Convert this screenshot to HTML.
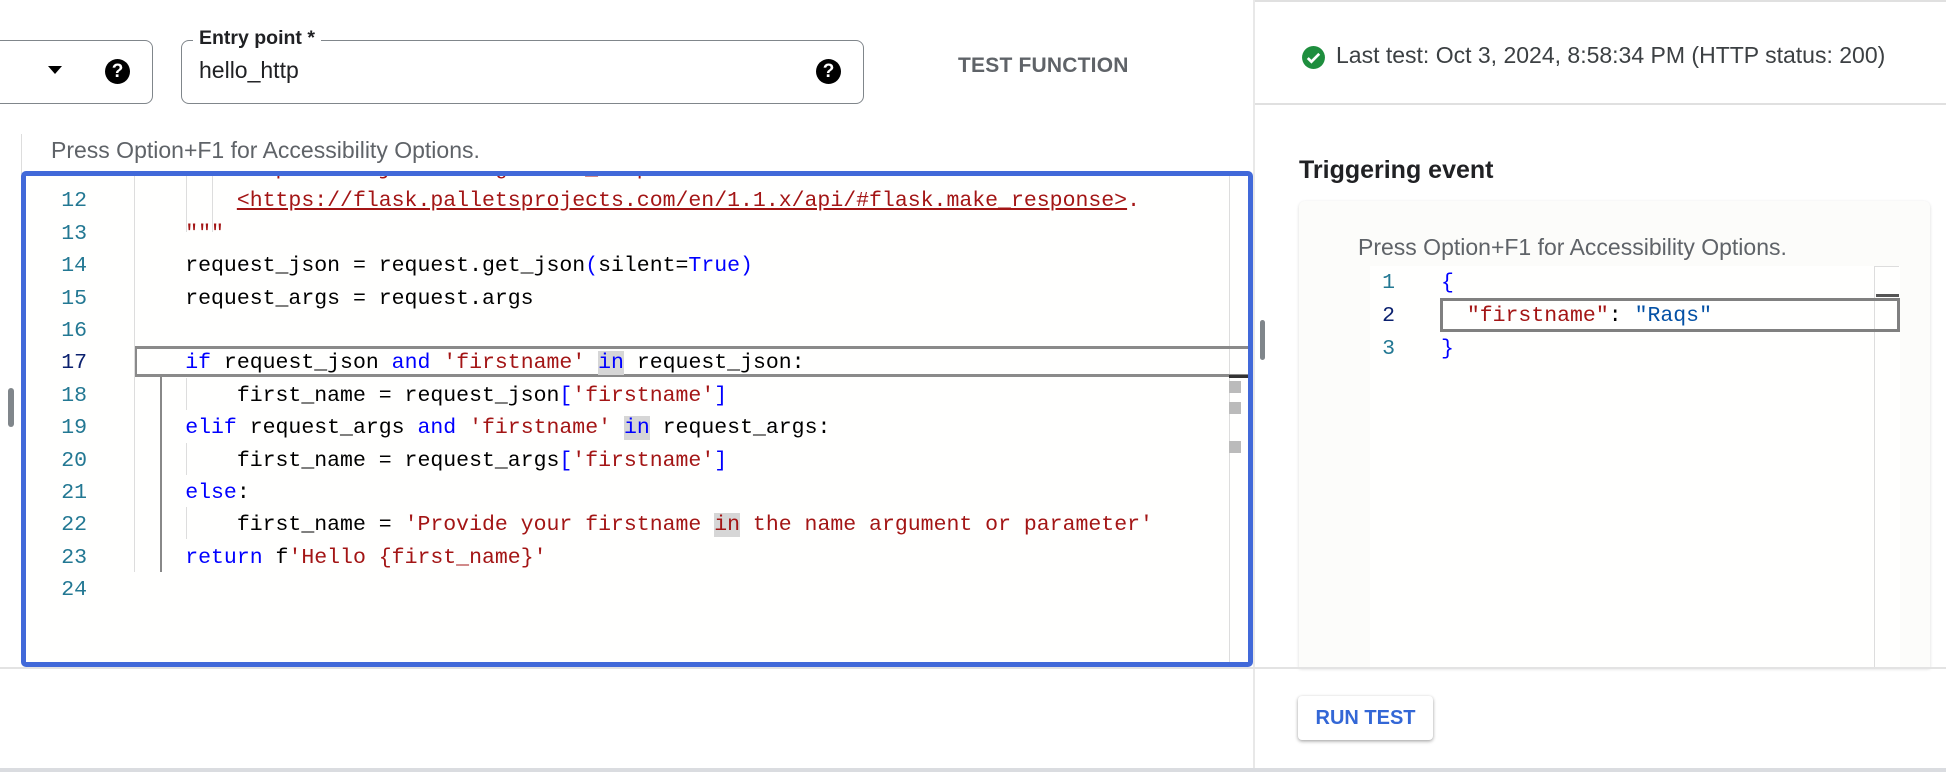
<!DOCTYPE html>
<html><head><meta charset="utf-8"><style>
*{margin:0;padding:0;box-sizing:border-box}
body{width:1946px;height:772px;overflow:hidden;background:#fff;position:relative;font-family:"Liberation Sans",sans-serif}
.a{position:absolute}
.mono{font-family:"Liberation Mono",monospace;font-size:21.5px;white-space:pre;line-height:32px}
.k{color:#0000ff}.s{color:#a31515}.n{color:#237893}
.hl{background:#d6d6d6}
.q{width:25px;height:25px;border-radius:50%;background:#000;color:#fff;font-weight:bold;font-size:19px;text-align:center;line-height:25px}
</style></head><body>
<!-- top fields -->
<div class="a" style="left:-10px;top:40px;width:163px;height:64px;border:1.5px solid #80868b;border-radius:8px"></div>
<div class="a" style="left:48px;top:66px;width:0;height:0;border-left:7px solid transparent;border-right:7px solid transparent;border-top:8px solid #000"></div>
<div class="a q" style="left:105px;top:59px">?</div>
<div class="a" style="left:181px;top:40px;width:683px;height:64px;border:1.5px solid #80868b;border-radius:8px"></div>
<div class="a" style="left:193px;top:27px;background:#fff;padding:0 6px;font-size:19.5px;font-weight:bold;color:#202124">Entry point *</div>
<div class="a" style="left:199px;top:57px;font-size:23px;color:#202124">hello_http</div>
<div class="a q" style="left:816px;top:59px">?</div>
<div class="a" style="left:958px;top:54px;font-size:21px;font-weight:bold;color:#5f6368;letter-spacing:0.2px">TEST FUNCTION</div>

<!-- left editor -->
<div class="a" style="left:21px;top:134px;width:1px;height:40px;background:#ddd"></div>
<div class="a" style="left:51px;top:137px;font-size:23px;color:#5f6368">Press Option+F1 for Accessibility Options.</div>
<div class="a" style="left:8px;top:388px;width:6px;height:39px;border-radius:3px;background:#80868b"></div>

<div class="a" style="left:21px;top:171px;width:1232px;height:496px;border:5px solid #4169d9;border-radius:5px;overflow:hidden;background:#fffffe">
 <div class="a" style="left:-26px;top:-176px;width:1946px;height:800px">
  <div class="a" style="left:134px;top:0;width:1px;height:572px;background:#ddd"></div>
  <div class="a" style="left:1229px;top:0;width:1px;height:800px;background:#ddd"></div>
  <!-- current line -->
  <div class="a" style="left:135px;top:346px;width:1120px;height:31px;border-top:3px solid #8a8a8a;border-bottom:3px solid #8a8a8a;border-left:2px solid #8a8a8a"></div>
  <div class="a" style="left:1229px;top:375px;width:20px;height:3px;background:#333"></div>
  <div class="a" style="left:1229px;top:381px;width:12px;height:12px;background:#bbb"></div>
  <div class="a" style="left:1229px;top:402px;width:12px;height:12px;background:#bbb"></div>
  <div class="a" style="left:1229px;top:441px;width:12px;height:12px;background:#bbb"></div>
  <!-- indent guides -->
  <div class="a" style="left:160px;top:377px;width:2px;height:195px;background:#888"></div>
  <div class="a" style="left:186px;top:140px;width:1px;height:92px;background:#ddd"></div>
  <div class="a" style="left:212px;top:140px;width:1px;height:92px;background:#ddd"></div>
  <div class="a" style="left:186px;top:378px;width:1px;height:32px;background:#ddd"></div>
  <div class="a" style="left:186px;top:443px;width:1px;height:32px;background:#ddd"></div>
  <div class="a" style="left:186px;top:507px;width:1px;height:32px;background:#ddd"></div>
  <!-- line numbers -->
  <div class="a mono n" style="left:30px;top:153px;width:57px;text-align:right;line-height:32.4px">11
12
13
14
15
16
<span style="color:#0b216f">17</span>
18
19
20
21
22
23
24</div>
  <div class="a mono" style="left:82px;top:153px;line-height:32.4px"><span class="s">            Response object using `make_response`</span>
<span class="s">            <span style="text-decoration:underline">&lt;https://flask.palletsprojects.com/en/1.1.x/api/#flask.make_response&gt;</span>.</span>
<span class="s">        """</span>
        request_json = request.get_json<span class="k">(</span>silent=<span class="k">True</span><span class="k">)</span>
        request_args = request.args

        <span class="k">if</span> request_json <span class="k">and</span> <span class="s">'firstname'</span> <span class="k hl">in</span> request_json:
            first_name = request_json<span class="k">[</span><span class="s">'firstname'</span><span class="k">]</span>
        <span class="k">elif</span> request_args <span class="k">and</span> <span class="s">'firstname'</span> <span class="k hl">in</span> request_args:
            first_name = request_args<span class="k">[</span><span class="s">'firstname'</span><span class="k">]</span>
        <span class="k">else</span>:
            first_name = <span class="s">'Provide your firstname <span class="hl">in</span> the name argument or parameter'</span>
        <span class="k">return</span> f<span class="s">'Hello {first_name}'</span>
</div>
 </div>
</div>

<!-- divider -->
<div class="a" style="left:1253px;top:0;width:2px;height:772px;background:#e8e8e8"></div>
<div class="a" style="left:1260px;top:320px;width:5px;height:40px;border-radius:3px;background:#80868b"></div>
<div class="a" style="left:1255px;top:0;width:691px;height:2px;background:#e0e0e0"></div>
<div class="a" style="left:1255px;top:103px;width:691px;height:2px;background:#e0e0e0"></div>

<!-- right panel -->
<svg class="a" style="left:1301px;top:45px" width="25" height="25" viewBox="0 0 24 24"><circle cx="12" cy="12" r="11" fill="#1e8e3e"/><path d="M6.5 12.5l3.5 3.5 7.5-7.5" stroke="#fff" stroke-width="2.6" fill="none"/></svg>
<div class="a" style="left:1336px;top:42px;font-size:23px;color:#3c4043">Last test: Oct 3, 2024, 8:58:34 PM (HTTP status: 200)</div>
<div class="a" style="left:1299px;top:156px;font-size:25px;font-weight:bold;color:#202124">Triggering event</div>

<div class="a" style="left:1299px;top:201px;width:631px;height:467px;background:#fcfcfa;border-radius:6px 6px 0 0;box-shadow:0 1px 3px rgba(0,0,0,0.15)"></div>
<div class="a" style="left:1358px;top:234px;font-size:23px;color:#5f6368">Press Option+F1 for Accessibility Options.</div>
<div class="a" style="left:1370px;top:266px;width:530px;height:402px;background:#fffffe"></div>
<div class="a" style="left:1874px;top:266px;width:1px;height:402px;background:#ddd"></div>
<div class="a" style="left:1874px;top:266px;width:25px;height:1px;background:#ddd"></div>
<div class="a" style="left:1876px;top:294px;width:23px;height:3px;background:#555"></div>
<div class="a" style="left:1440px;top:298px;width:460px;height:34px;border:3px solid #808080"></div>
<div class="a mono n" style="left:1370px;top:267px;width:25px;text-align:right;line-height:33px">1
<span style="color:#0b216f">2</span>
3</div>
<div class="a mono" style="left:1441px;top:267px;line-height:33px"><span class="k">{</span>
  <span class="s">"firstname"</span>: <span style="color:#0451a5">"Raqs"</span>
<span class="k">}</span></div>

<div class="a" style="left:0;top:667px;width:1946px;height:2px;background:#e3e3e3"></div>
<div class="a" style="left:1298px;top:696px;width:135px;height:44px;background:#fff;border-radius:4px;box-shadow:0 1px 3px rgba(0,0,0,0.3),0 2px 4px rgba(0,0,0,0.1);color:#3367d6;font-weight:bold;font-size:20px;text-align:center;line-height:44px">RUN TEST</div>
<div class="a" style="left:0;top:768px;width:1946px;height:4px;background:#dadce0"></div>
</body></html>
